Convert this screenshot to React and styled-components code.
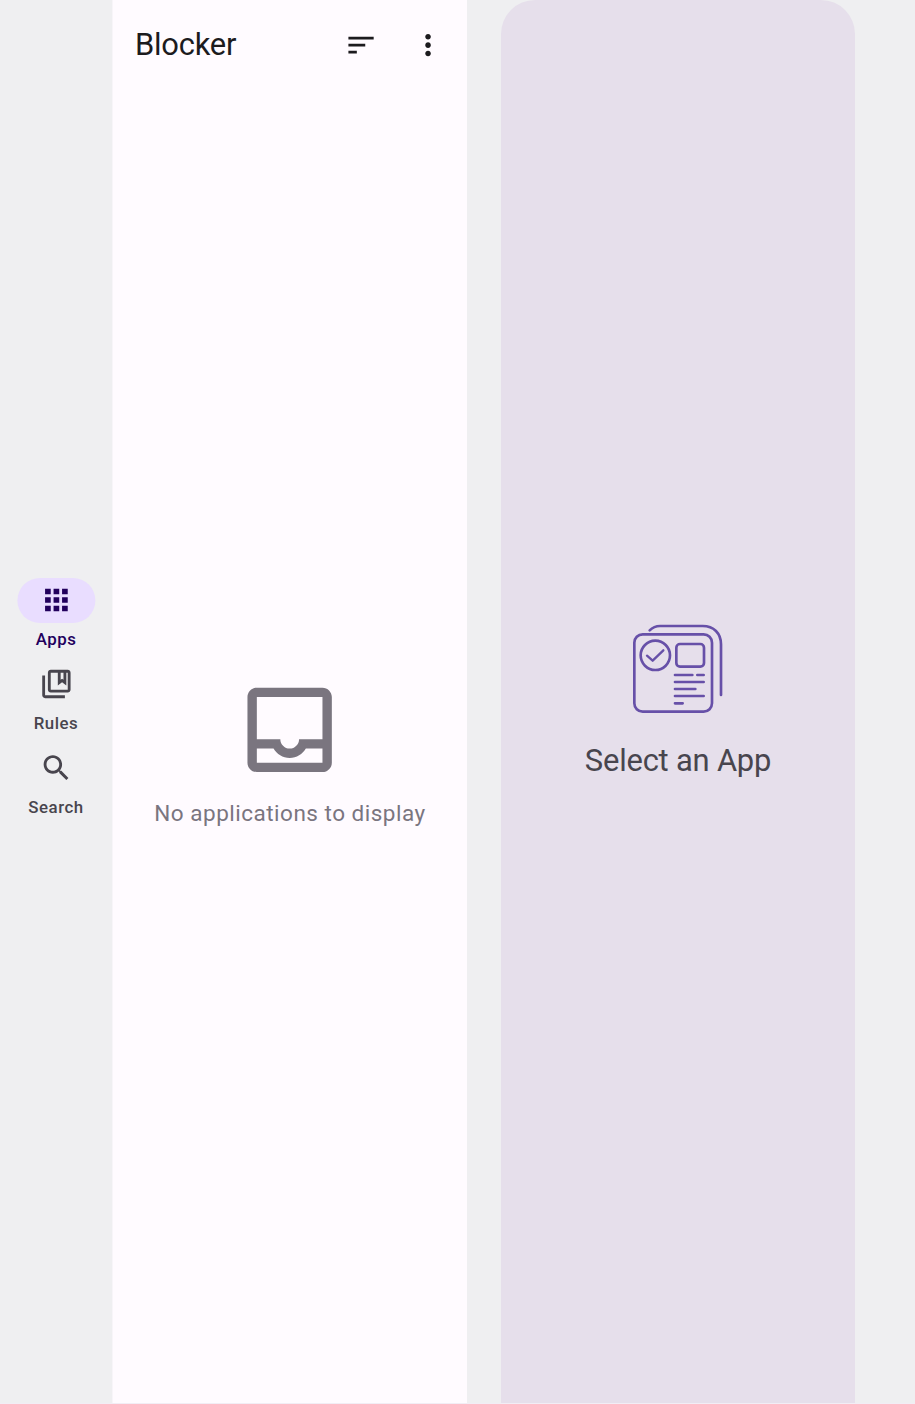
import React from "react";
import styled, { createGlobalStyle } from "styled-components";

const GlobalStyle = createGlobalStyle`
  html, body { margin: 0; padding: 0; background: #efeff1; }
  * { box-sizing: border-box; }
`;

const Screen = styled.div`
  display: flex;
  width: 915px;
  height: 1404px;
  overflow: hidden;
  background: #efeff1;
  border-bottom: 1px solid #f2edf5;
  font-family: Roboto, "Liberation Sans", sans-serif;
`;

const Rail = styled.nav`
  display: flex;
  flex-direction: column;
  align-items: center;
  width: 112px;
  padding-top: 578px;
  flex: none;
`;

const RailItem = styled.button`
  display: flex;
  flex-direction: column;
  align-items: center;
  height: 84px;
  padding: 0;
  border: 0;
  background: none;
  color: ${(p) => (p.$active ? "#22005d" : "#48454e")};
  font: 500 16.85px/22px Roboto, "Liberation Sans", sans-serif;
  letter-spacing: 0.5px;
`;

const Indicator = styled.span`
  display: flex;
  align-items: center;
  justify-content: center;
  width: 78.6px;
  height: 44.6px;
  margin-bottom: 5.4px;
  border-radius: 23px;
  background: ${(p) => (p.$active ? "#e9ddff" : "transparent")};
  transform: translateX(0.4px);
`;

const Icon = styled.svg`
  display: block;
  flex: none;
  width: ${(p) => p.$size || 33.7}px;
  height: ${(p) => p.$size || 33.7}px;
  fill: currentColor;
`;

const ListPane = styled.main`
  display: flex;
  flex-direction: column;
  width: 355px;
  flex: none;
  background: #fffbff;
  box-shadow: inset 1px 0 #f8f5f9;
`;

const TopBar = styled.header`
  display: flex;
  align-items: center;
  height: 90px;
  padding: 0 22px 0 23px;
  color: #1c1b1e;
`;

const Title = styled.h1`
  flex: 1;
  margin: 0;
  font-size: 30.9px;
  line-height: 40px;
  font-weight: 400;
  letter-spacing: -0.22px;
`;

const Actions = styled.div`
  display: flex;
  gap: 33.7px;
  transform: translate(0.2px, 0.3px);
`;

const EmptyState = styled.section`
  display: flex;
  flex-direction: column;
  align-items: center;
  padding-top: 584px;
  color: #7a757f;
`;

const EmptyIcon = styled.div`
  transform: translate(0.4px, -0.4px);
`;

const EmptyText = styled.p`
  margin: 9.5px 0 0 1px;
  font-size: 22.5px;
  line-height: 34px;
  letter-spacing: 0.5px;
`;

const DetailPane = styled.aside`
  display: flex;
  flex-direction: column;
  align-items: center;
  width: 354px;
  margin-left: 34px;
  padding-top: 623px;
  flex: none;
  border-radius: 34px 34px 0 0;
  background: #e6dfeb;
`;

const Illustration = styled.svg`
  display: block;
  width: 92px;
  height: 91px;
  fill: none;
  stroke: #6750a8;
  stroke-width: 8;
  stroke-linecap: round;
  stroke-linejoin: round;
`;

const Prompt = styled.p`
  margin: 26.5px 0 0;
  color: #48454e;
  font-size: 30.9px;
  line-height: 40px;
  letter-spacing: -0.2px;
`;

const icons = {
  apps: "M4 8h4V4H4v4zm6 12h4v-4h-4v4zm-6 0h4v-4H4v4zm0-6h4v-4H4v4zm6 0h4v-4h-4v4zm6-10v4h4V4h-4zm-6 4h4V4h-4v4zm6 6h4v-4h-4v4zm0 6h4v-4h-4v4z",
  rules:
    "M4 6H2v14c0 1.1.9 2 2 2h14v-2H4V6zm16-4H8c-1.1 0-2 .9-2 2v12c0 1.1.9 2 2 2h12c1.1 0 2-.9 2-2V4c0-1.1-.9-2-2-2zm-5 2h2v5l-1-.75L15 9V4zm5 12H8V4h5v9l3-2.25L19 13V4h1v12z",
  search:
    "M15.5 14h-.79l-.28-.27C15.41 12.59 16 11.11 16 9.5 16 5.91 13.09 3 9.5 3S3 5.91 3 9.5 5.91 16 9.5 16c1.61 0 3.09-.59 4.23-1.57l.27.28v.79l5 4.99L20.49 19l-4.99-5zm-6 0C7.01 14 5 11.99 5 9.5S7.01 5 9.5 5 14 7.01 14 9.5 11.99 14 9.5 14z",
  sort: "M3 18h6v-2H3v2zM3 6v2h18V6H3zm0 7h12v-2H3v2z",
  more: "M12 8c1.1 0 2-.9 2-2s-.9-2-2-2-2 .9-2 2 .9 2 2 2zm0 2c-1.1 0-2 .9-2 2s.9 2 2 2 2-.9 2-2-.9-2-2-2zm0 6c-1.1 0-2 .9-2 2s.9 2 2 2 2-.9 2-2-.9-2-2-2z",
  inbox:
    "M19 3H5c-1.1 0-2 .9-2 2v14c0 1.1.9 2 2 2h14c1.1 0 2-.9 2-2V5c0-1.1-.9-2-2-2zm0 16H5v-3h3.56c.69 1.19 1.97 2 3.45 2s2.75-.81 3.45-2H19v3zm0-5h-4.99c0 1.1-.9 2-2 2s-2-.9-2-2H5V5h14v9z",
};

const Glyph = ({ name, size }) => (
  <Icon viewBox="0 0 24 24" $size={size} aria-hidden="true">
    <path d={icons[name]} />
  </Icon>
);

const destinations = [
  { icon: "apps", label: "Apps", active: true },
  { icon: "rules", label: "Rules" },
  { icon: "search", label: "Search" },
];

export default function App() {
  return (
    <>
      <GlobalStyle />
      <Screen>
        <Rail>
          {destinations.map((d) => (
            <RailItem key={d.label} $active={d.active}>
              <Indicator $active={d.active}>
                <Glyph name={d.icon} size={34} />
              </Indicator>
              {d.label}
            </RailItem>
          ))}
        </Rail>
        <ListPane>
          <TopBar>
            <Title>Blocker</Title>
            <Actions>
              <Glyph name="sort" />
              <Glyph name="more" />
            </Actions>
          </TopBar>
          <EmptyState>
            <EmptyIcon>
              <Glyph name="inbox" size={112.5} />
            </EmptyIcon>
            <EmptyText>No applications to display</EmptyText>
          </EmptyState>
        </ListPane>
        <DetailPane>
          <Illustration viewBox="36 24 276 273" aria-hidden="true">
            <rect x="43" y="58" width="233" height="232" rx="25" />
            <path d="M89 46C98 37 108 33 120 33H248C281 33 303 55 303 88V240" />
            <circle cx="106" cy="121" r="44" />
            <path d="M81 122L98 137L130 106" strokeWidth="7" />
            <rect x="169" y="87" width="83" height="68" rx="11" />
            <path d="M165 180H217M232 180H251M165 201H251M165 222H226M165 243H251M165 265H188" />
          </Illustration>
          <Prompt>Select an App</Prompt>
        </DetailPane>
      </Screen>
    </>
  );
}
